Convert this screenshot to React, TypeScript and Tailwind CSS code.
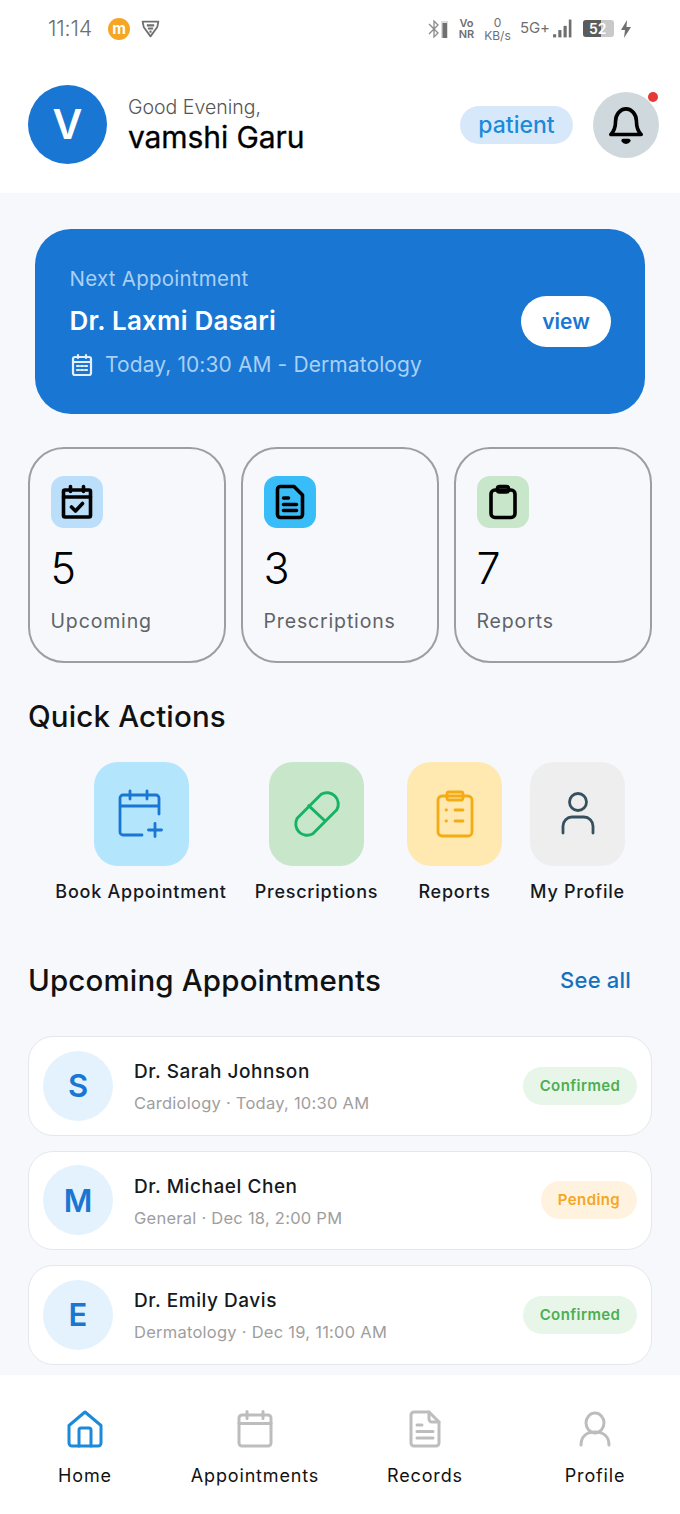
import React from "react";

const font = { fontFamily: "Inter, sans-serif" };

function StatusBar() {
  return (
    <div className="h-[56px] flex items-center justify-between pl-[48px] pr-[48px] text-[#6f6f6f] bg-white pt-[1px]">
      <div className="flex items-center">
        <span className="text-[21.5px] font-light w-[45px] leading-none tracking-[-0.2px]">11:14</span>
        <div className="ml-[15px] w-[22px] h-[22px] rounded-full bg-[#f5a623] flex items-center justify-center text-white text-[15px] font-bold leading-none">m</div>
        <svg className="ml-[10px]" width="21" height="21" viewBox="0 0 20 20" fill="none">
          <path d="M2.500 3.500h15l-1 5-6.500 9-6.500-9z" stroke="#6f6f6f" strokeWidth="1.700" strokeLinejoin="round" />
          <path d="M6.500 7h7M7.500 10h5M9 13h2" stroke="#6f6f6f" strokeWidth="2" />
        </svg>
      </div>
      <div className="flex items-center">
        <svg width="22" height="24" viewBox="0 0 22 22" fill="none">
          <path d="M2 6l9 9-4 4V3l4 4-9 9" stroke="#8a8a8a" strokeWidth="1.300" />
          <rect x="14" y="3" width="7" height="17" fill="#dcdcdc" />
          <rect x="15.500" y="5" width="4.500" height="15" fill="#707070" />
        </svg>
        <div className="ml-[10px] w-[15px] flex flex-col items-center text-[11px] leading-[11px] font-semibold">
          <span>Vo</span>
          <span>NR</span>
        </div>
        <div className="ml-[10px] w-[27px] flex flex-col items-center text-[12px] leading-[13px] pt-[1px]">
          <span>0</span>
          <span>KB/s</span>
        </div>
        <span className="ml-[9px] text-[15px] leading-none mb-[3px] w-[28px] tracking-[-0.2px]">5G+</span>
        <svg className="ml-[4px]" width="21" height="22" viewBox="0 0 20 20" fill="#6f6f6f">
          <rect x="1" y="15" width="3" height="3" />
          <rect x="6" y="11" width="3" height="7" />
          <rect x="11" y="7" width="3" height="11" />
          <rect x="16" y="1" width="2.500" height="17" />
        </svg>
        <div className="ml-[10px] w-[31px] h-[17px] rounded-[3px] bg-[#c9c9c9] relative flex items-center overflow-hidden">
          <div className="w-[18px] h-full bg-[#5c5c5c]" />
          <span className="absolute left-[6px] top-0 text-[14px] leading-[17px] text-white font-semibold">52</span>
        </div>
        <svg className="ml-[6px]" width="12" height="22" viewBox="0 0 12 20" fill="#6f6f6f">
          <path d="M7 1 1 11h4l-1 8 7-11H6.500z" />
        </svg>
      </div>
    </div>
  );
}

function Header() {
  return (
    <div className="h-[137px] bg-white flex items-start pl-[28px] pr-[21px] pt-[29px]">
      <div className="w-[79px] h-[79px] rounded-full bg-[#1976d2] flex items-center justify-center text-white text-[41px] font-semibold leading-none">V</div>
      <div className="ml-[21px] mt-[9px] flex flex-col">
        <span className="text-[19.5px] leading-[26px] font-light text-[#555]">Good Evening,</span>
        <span className="text-[30px] leading-[34px] font-normal text-black tracking-[-0.1px] [-webkit-text-stroke:0.3px_black]">vamshi Garu</span>
      </div>
      <div className="ml-auto mt-[21px] w-[113px] h-[38px] rounded-full bg-[#d8e8fb] flex items-center justify-center text-[#1b8ad9] text-[23px] font-medium leading-none">patient</div>
      <div className="ml-[20px] mt-[7px] w-[66px] h-[66px] rounded-full bg-[#cfd8dc] flex items-center justify-center relative">
        <svg width="38" height="42" viewBox="0 0 40 42" fill="none" stroke="#000" strokeWidth="3.800" strokeLinecap="round" strokeLinejoin="round">
          <path d="M4 31h32c-3-3-5-6-5-14 0-7-5-13-11-13S9 10 9 17c0 8-2 11-5 14z" />
          <path d="M17 37.500a3.500 3.500 0 0 0 6 0z" fill="#000" />
        </svg>
        <div className="absolute top-0 right-[1px] w-[10px] h-[10px] rounded-full bg-[#e53935]" />
      </div>
    </div>
  );
}

function NextAppointment() {
  return (
    <div className="mx-[35px] mt-[36px] h-[185px] rounded-[36px] bg-[#1976d2] flex items-center justify-between pl-[34.500px] pr-[34px]">
      <div className="flex flex-col">
        <span className="text-[20.5px] leading-[24px] text-[#a9d0f5] tracking-[0.25px] mt-[1px]">Next Appointment</span>
        <span className="mt-[15px] text-[26px] leading-[30px] font-semibold text-white tracking-[0.2px]">Dr. Laxmi Dasari</span>
        <div className="mt-[16px] flex items-center">
          <svg width="24" height="24" viewBox="0 0 24 24" fill="none" stroke="#e3f0fc" strokeWidth="2.200" strokeLinecap="round">
            <rect x="3" y="4" width="18" height="18" rx="2" />
            <path d="M3 9h18M8 2v3M16 2v3" />
            <path d="M7 13h2M11 13h2M15 13h2M7 17h2M11 17h2M15 17h2" />
          </svg>
          <span className="ml-[11.500px] text-[21px] leading-[26px] text-[#a9d0f5] tracking-[0.1px]">Today, 10:30 AM - Dermatology</span>
        </div>
      </div>
      <div className="w-[90px] h-[51px] rounded-full bg-white flex items-center justify-center text-[#1976d2] text-[21px] font-semibold">view</div>
    </div>
  );
}

function StatCard({ bg, icon, n, label }: { bg: string; icon: React.ReactNode; n: string; label: string }) {
  return (
    <div className="w-[198px] h-[216px] rounded-[36px] border-2 border-[#9e9e9e] pl-[20.500px] pt-[27px] flex flex-col items-start">
      <div className={`w-[52px] h-[52px] rounded-[13px] flex items-center justify-center ${bg}`}>{icon}</div>
      <span className="mt-[15px] text-[43px] leading-[50px] font-light text-black">{n}</span>
      <span className="mt-[16px] text-[19.5px] leading-[24px] text-[#5f6368] tracking-[0.85px]">{label}</span>
    </div>
  );
}

const statStroke = { fill: "none", stroke: "#000", strokeWidth: 3.6, strokeLinecap: "round" as const, strokeLinejoin: "round" as const };

function Stats() {
  return (
    <div className="mt-[33px] mx-[28px] flex justify-between">
      <StatCard
        bg="bg-[#bbdefb]"
        n="5"
        label="Upcoming"
        icon={
          <svg width="32" height="36" viewBox="0 0 32 36" {...statStroke}>
            <rect x="2.500" y="6" width="27" height="27" rx="1.500" />
            <path d="M2.500 13h27M9.500 2.500v5M22.500 2.500v5" />
            <path d="M10.500 23l4 4 7-7.500" />
          </svg>
        }
      />
      <StatCard
        bg="bg-[#38bdf8]"
        n="3"
        label="Prescriptions"
        icon={
          <svg width="30" height="36" viewBox="0 0 30 36" {...statStroke}>
            <path d="M6 2.500h13l8.500 8.500v19.500a3 3 0 0 1-3 3h-19a3 3 0 0 1-3-3V5.500a3 3 0 0 1 3-3z" />
            <path d="M8.500 14h5M8.500 20.500h13M8.500 26.500h13" />
          </svg>
        }
      />
      <StatCard
        bg="bg-[#c8e6c9]"
        n="7"
        label="Reports"
        icon={
          <svg width="28" height="36" viewBox="0 0 28 36" {...statStroke}>
            <rect x="2" y="6" width="24" height="27.500" rx="4" />
            <rect x="8.500" y="2.500" width="11" height="5.500" rx="2" />
          </svg>
        }
      />
    </div>
  );
}

function Action({ bg, label, w, icon }: { bg: string; label: string; w: string; icon: React.ReactNode }) {
  return (
    <div className={`flex flex-col items-center shrink-0 ${w}`}>
      <div className={`w-[95px] h-[104px] rounded-[24px] flex items-center justify-center ${bg}`}>{icon}</div>
      <span className="mt-[15px] text-[18px] leading-[22px] font-medium text-[#16191d] whitespace-nowrap tracking-[0.75px]">{label}</span>
    </div>
  );
}

function QuickActions() {
  const s = { fill: "none", strokeWidth: 2.800, strokeLinecap: "round" as const, strokeLinejoin: "round" as const };
  return (
    <div className="mt-[36px]">
      <h2 className="ml-[28px] text-[29.500px] leading-[34px] font-medium text-[#111] tracking-[0.15px]">Quick Actions</h2>
      <div className="mt-[29px] pl-[56px] flex gap-[28px]">
        <Action
          bg="bg-[#b3e5fc]"
          label="Book Appointment"
          w="w-[170px]"
          icon={
            <svg width="46" height="50" viewBox="0 0 46 50" stroke="#1976d2" {...s}>
              <path d="M24 46H5a3 3 0 0 1-3-3V9a3 3 0 0 1 3-3h33a3 3 0 0 1 3 3v16M2 17h39M12 2v8M29 2v8M37 34.500v13M30.500 41h13" />
            </svg>
          }
        />
        <Action
          bg="bg-[#c8e6c9]"
          label="Prescriptions"
          w="w-[125px]"
          icon={
            <svg width="50" height="50" viewBox="0 0 48 48" stroke="#16b364" {...s}>
              <path d="M5 28 28 5a11 11 0 0 1 15 15L20 43A11 11 0 0 1 5 28zM16 16l16 15" />
            </svg>
          }
        />
        <Action
          bg="bg-[#ffe9b0]"
          label="Reports"
          w="w-[95px]"
          icon={
            <svg width="38" height="48" viewBox="0 0 38 48" stroke="#f5ab14" {...s}>
              <rect x="2" y="6" width="34" height="40" rx="4" />
              <rect x="11" y="2" width="16" height="8" rx="2" />
              <path d="M10 20h.5M19 20h8M10 31h.5M19 31h8" />
            </svg>
          }
        />
        <Action
          bg="bg-[#eeeeee]"
          label="My Profile"
          w="w-[95px]"
          icon={
            <svg width="36" height="46" viewBox="0 0 36 46" stroke="#37505e" {...s}>
              <circle cx="18" cy="11" r="8.500" />
              <path d="M3 42v-7a9 9 0 0 1 9-9h12a9 9 0 0 1 9 9v7" />
            </svg>
          }
        />
      </div>
    </div>
  );
}

function Appt({ l, name, sub, status }: { l: string; name: string; sub: string; status: "Confirmed" | "Pending" }) {
  const ok = status === "Confirmed";
  return (
    <div className="h-[99.500px] rounded-[25px] bg-white border border-[#e4e7eb] flex items-center pl-[14px] pr-[14px]">
      <div className="w-[70px] h-[70px] rounded-full bg-[#e3f2fd] flex items-center justify-center text-[#1976d2] text-[31px] font-semibold leading-none">{l}</div>
      <div className="ml-[21px] flex flex-col pt-[1.500px]">
        <span className="text-[19px] leading-[24px] font-medium text-[#16191d] tracking-[0.55px]">{name}</span>
        <span className="mt-[9px] text-[16.500px] leading-[20px] text-[#9e9e9e] tracking-[0.25px]">{sub}</span>
      </div>
      <div className={`ml-auto h-[38px] rounded-full flex items-center justify-center text-[15px] font-semibold tracking-[0.4px] ${ok ? "w-[114px] bg-[#e8f5e9] text-[#4caf50]" : "w-[96px] bg-[#fff3e0] text-[#f5a623]"}`}>{status}</div>
    </div>
  );
}

function Upcoming() {
  return (
    <div className="mt-[59px]">
      <div className="mx-[28px] flex items-center justify-between">
        <h2 className="text-[29.500px] leading-[36px] font-medium text-[#111] tracking-[0.15px]">Upcoming Appointments</h2>
        <span className="mr-[21px] text-[22px] font-medium text-[#1372bd] tracking-[0.2px]">See all</span>
      </div>
      <div className="mt-[38px] mx-[28px] flex flex-col gap-[15px]">
        <Appt l="S" name="Dr. Sarah Johnson" sub="Cardiology · Today, 10:30 AM" status="Confirmed" />
        <Appt l="M" name="Dr. Michael Chen" sub="General · Dec 18, 2:00 PM" status="Pending" />
        <Appt l="E" name="Dr. Emily Davis" sub="Dermatology · Dec 19, 11:00 AM" status="Confirmed" />
      </div>
    </div>
  );
}

function NavItem({ label, icon }: { label: string; icon: React.ReactNode }) {
  return (
    <div className="flex-1 flex flex-col items-center">
      <div className="h-[42px] flex items-center justify-center">{icon}</div>
      <span className="mt-[14px] text-[18px] leading-[24px] text-[#111] tracking-[0.85px]">{label}</span>
    </div>
  );
}

function BottomNav() {
  const s = { fill: "none", strokeWidth: 3, strokeLinecap: "round" as const, strokeLinejoin: "round" as const };
  return (
    <div className="absolute left-0 right-0 bottom-0 h-[139px] bg-white flex pt-[33px]">
      <NavItem
        label="Home"
        icon={
          <svg width="36" height="38" viewBox="0 0 36 38" stroke="#1b8ad9" {...s}>
            <path d="M2 15.500 18 2l16 13.500V33a3 3 0 0 1-3 3H5a3 3 0 0 1-3-3z" />
            <path d="M12 36V20a2 2 0 0 1 2-2h8a2 2 0 0 1 2 2v16" />
          </svg>
        }
      />
      <NavItem
        label="Appointments"
        icon={
          <svg width="36" height="38" viewBox="0 0 36 38" stroke="#bdbdbd" {...s}>
            <rect x="2" y="5" width="32" height="31" rx="3" />
            <path d="M2 13.500h32M10 1.500v7M26 1.500v7" />
          </svg>
        }
      />
      <NavItem
        label="Records"
        icon={
          <svg width="32" height="38" viewBox="0 0 32 38" stroke="#bdbdbd" {...s}>
            <path d="M5 2h15l10 10v21a3 3 0 0 1-3 3H5a3 3 0 0 1-3-3V5a3 3 0 0 1 3-3z" />
            <path d="M20 2v7a3 3 0 0 0 3 3h7M8 15h5M8 21.500h16M8 28h16" />
          </svg>
        }
      />
      <NavItem
        label="Profile"
        icon={
          <svg width="32" height="36" viewBox="0 0 32 36" stroke="#bdbdbd" {...s}>
            <ellipse cx="16" cy="12" rx="9" ry="10" />
            <path d="M2 34c0-8 5-13 14-13s14 5 14 13" />
          </svg>
        }
      />
    </div>
  );
}

export default function App() {
  return (
    <div style={font} className="relative w-[680px] h-[1514px] overflow-hidden bg-[#f6f8fc]">
      <StatusBar />
      <Header />
      <NextAppointment />
      <Stats />
      <QuickActions />
      <Upcoming />
      <BottomNav />
    </div>
  );
}
